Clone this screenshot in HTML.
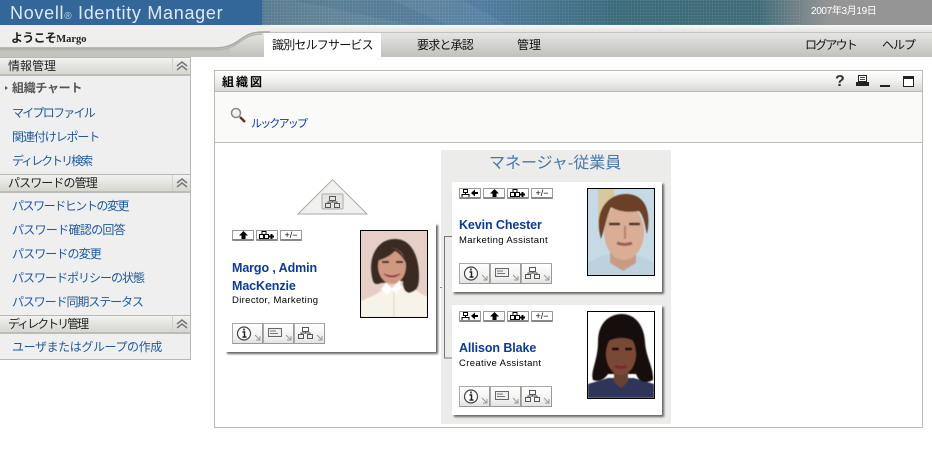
<!DOCTYPE html>
<html lang="ja"><head><meta charset="utf-8"><title>Novell Identity Manager</title>
<style>
*{box-sizing:border-box}
html,body{margin:0;padding:0;width:932px;height:464px;overflow:hidden;background:#fff;font-family:"Liberation Sans","WenQuanYi Zen Hei","Noto Sans CJK JP",sans-serif;font-size:12px}
.a{position:absolute;white-space:nowrap}
.sh{position:absolute;left:0;width:190px;height:19px;background:linear-gradient(#f2f2f0,#e0e0dc 60%,#d8d8d3);border-top:1px solid #b9b9b3;border-bottom:2px solid #bcbcb6;color:#222;padding-left:8px;line-height:17px}
.sh b{position:absolute;left:172px;top:0;width:18px;height:16px;border-left:1px solid #d0d0cc}
.it{position:absolute;left:12px;color:#1d5a9c;white-space:nowrap;line-height:14px}
.tb{position:absolute;height:11px;width:22px;background:#fff;border:1px solid #999;border-bottom:2px solid #888;border-radius:1px;font:9px/9px "Liberation Sans",sans-serif;text-align:center;color:#000}
.card{position:absolute;background:#fff;box-shadow:2px 2px 2px #666}
.ab{position:absolute;width:31px;height:21px;background:linear-gradient(#fff,#f0f0ee 70%,#e2e2e0);border:1px solid #aaa;border-right:1px solid #999;border-bottom:1px solid #999}
.name{position:absolute;color:#0b3a9e;font:bold 12.500px/18px "Liberation Sans",sans-serif;letter-spacing:-.1px;white-space:nowrap}
.job{position:absolute;color:#000;font:9.500px/12px "Liberation Sans",sans-serif;letter-spacing:.35px;white-space:nowrap}
.ph{position:absolute;width:68px;height:88px;border:1px solid #000;overflow:hidden}
svg{display:block}
</style></head><body>
<svg width="0" height="0" style="position:absolute"><defs>
<filter id="soft"><feGaussianBlur stdDeviation=".6"/></filter>
<g id="org" fill="none" stroke="#555" stroke-width="1"><rect x="4.500" y=".5" width="6" height="4"/><rect x=".5" y="7.500" width="5" height="4"/><rect x="9.500" y="7.500" width="5" height="4"/><path d="M7.500 4.500v1.500M3 7.500V6h9v1.500"/></g>
<g id="tree" fill="none" stroke="#000"><path d="M.5 3.500h4v4h-4zM5.500 3.500h4v4h-4zM3 3.500V.5h4v3"/><path d="M10 5.500h5M12.500 3v5" stroke-width="2"/></g>
<g id="up"><path d="M4.500 0L9 4.500H6.500V8h-4V4.500H0z"/></g>
<g id="mgr" fill="none" stroke="#000"><path d="M2.500.5h4v3h-4zM.5 5.500h8M4.500 3.500v2M1 5.500v2.500M8 5.500v2.500"/><path d="M10 4l4-3.500V3h3v2h-3v2.500z" fill="#000" stroke="none"/></g>
<g id="ag"><path fill="none" stroke="#999" d="M0 0L5 5M5 1V5H1"/></g>
<g id="info"><circle cx="11" cy="9.500" r="6.500" fill="#fff" stroke="#444" stroke-width="1.200"/><path d="M11 4.500v2" stroke="#222" stroke-width="1.500"/><path d="M9.500 8H11.500v5M9.500 13h4" stroke="#222" stroke-width="1.500" fill="none"/></g>
<g id="card"><rect x="4.500" y="4.500" width="13" height="8" fill="#eee" stroke="#666"/><path d="M6 7h6M6 9.500h8" stroke="#777"/></g>
<pattern id="dots" width="3" height="3" patternUnits="userSpaceOnUse"><rect width="1" height="1" fill="#fff" opacity=".12"/><rect x="1.500" y="1.500" width="1" height="1" fill="#000" opacity=".12"/></pattern>
</defs></svg>

<!-- header -->
<div class="a" style="left:0;top:0;width:932px;height:25px;background:linear-gradient(90deg,#336699 0,#336699 262px,#53788f 263px,#5c8296 330px,#557fa3 480px,#3f6f7e 620px,#44707c 760px,#77878c 800px,#959595 830px,#959595 100%)"></div>
<svg class="a" style="left:262px;top:0" width="540" height="25"><path d="M30 0L150 25H0V0z M130 0h70l45 25h-60z" fill="#fff" opacity=".06"/><rect width="540" height="25" fill="url(#dots)"/></svg>
<div class="a" style="left:10px;top:1px;color:#dfe9f3;font:18px/24px 'Liberation Sans',sans-serif;letter-spacing:.7px">Novell<span style="font-size:10px;opacity:.85">®</span> Identity Manager</div>
<div class="a" style="left:811px;top:6px;color:#fff;font-size:10px;line-height:12px;letter-spacing:-.35px">2007年3月19日</div>

<!-- top band -->
<div class="a" style="left:0;top:25px;width:932px;height:32px;background:#c3c4bf"></div>
<div class="a" style="left:0;top:25px;width:932px;height:7px;background:linear-gradient(#f7f7f6,#e4e4e2)"></div>
<div class="a" style="left:230px;top:33px;width:702px;height:24px;background:linear-gradient(#e5e6e3,#bfc1bb)"></div>
<svg class="a" style="left:0;top:25px" width="270" height="32"><path d="M0 0H270V7H262C240 7 240 23 215 23H0z" fill="#efefed"/><path d="M0 23H215C240 23 240 7 262 7H270" fill="none" stroke="#a9aaa4" stroke-width="1.500"/><path d="M0 25H215C240 25 240 9 262 9" fill="none" stroke="#b5b6b0" stroke-width="1.500"/></svg>
<div class="a" style="left:11px;top:31px;color:#222;font-weight:bold;line-height:14px;font-size:12px;letter-spacing:-.7px">ようこそ<span style="font-size:10.500px;letter-spacing:0;font-family:'Liberation Serif',serif">Margo</span></div>
<div class="a" style="left:264px;top:33px;width:117px;height:24px;background:#fff"></div>
<div class="a" style="left:272px;top:38px;color:#111;line-height:14px;letter-spacing:-.8px">識別セルフサービス</div>
<div class="a" style="left:417px;top:38px;color:#111;line-height:14px;letter-spacing:-.8px">要求と承認</div>
<div class="a" style="left:517px;top:38px;color:#111;line-height:14px">管理</div>
<div class="a" style="left:805px;top:38px;color:#111;line-height:14px;letter-spacing:-1.800px">ログアウト</div>
<div class="a" style="left:882px;top:38px;color:#111;line-height:14px;letter-spacing:-1px">ヘルプ</div>

<!-- sidebar -->
<div class="a" style="left:0;top:57px;width:191px;height:303px;background:#efefef;border-right:1px solid #b9b9b3;border-bottom:1px solid #b9b9b3"></div>
<div class="sh" style="top:57px">情報管理<b><svg width="18" height="16"><path d="M4 8l5-4 5 4M4 12l5-4 5 4" fill="none" stroke="#777" stroke-width="1.500"/></svg></b></div>
<div class="a" style="left:5px;top:86px;width:0;height:0;border-left:3px solid #555;border-top:2px solid transparent;border-bottom:2px solid transparent"></div>
<div class="it" style="top:81px;color:#555;font-weight:bold;letter-spacing:-.3px">組織チャート</div>
<div class="it" style="top:106px;letter-spacing:-1.750px">マイプロファイル</div>
<div class="it" style="top:130px;letter-spacing:-1.100px">関連付けレポート</div>
<div class="it" style="top:154px;letter-spacing:-2px">ディレクトリ検索</div>
<div class="sh" style="top:174px;letter-spacing:-.9px">パスワードの管理<b><svg width="18" height="16"><path d="M4 8l5-4 5 4M4 12l5-4 5 4" fill="none" stroke="#777" stroke-width="1.500"/></svg></b></div>
<div class="it" style="top:199px;letter-spacing:-1.450px">パスワードヒントの変更</div>
<div class="it" style="top:223px;letter-spacing:-.7px">パスワード確認の回答</div>
<div class="it" style="top:247px;letter-spacing:-.9px">パスワードの変更</div>
<div class="it" style="top:271px;letter-spacing:-1px">パスワードポリシーの状態</div>
<div class="it" style="top:295px;letter-spacing:-1.100px">パスワード同期ステータス</div>
<div class="sh" style="top:315px;letter-spacing:-2px">ディレクトリ管理<b><svg width="18" height="16"><path d="M4 8l5-4 5 4M4 12l5-4 5 4" fill="none" stroke="#777" stroke-width="1.500"/></svg></b></div>
<div class="it" style="top:340px;letter-spacing:-.4px">ユーザまたはグループの作成</div>

<!-- panel -->
<div class="a" style="left:214px;top:70px;width:709px;height:358px;border:1px solid #bcbcb6;background:#fff"></div>
<div class="a" style="left:215px;top:71px;width:707px;height:21px;background:linear-gradient(#fff,#eeeeec 55%,#d6d7d2);border-bottom:1px solid #bcbcb6"></div>
<div class="a" style="left:222px;top:75px;color:#000;font-weight:bold;letter-spacing:2px;line-height:14px">組織図</div>
<div class="a" style="left:835px;top:74px;color:#333;font:bold 16px/15px 'Liberation Sans',sans-serif">?</div>
<svg class="a" style="left:855px;top:75px" width="70" height="14"><path d="M3.500 .5h8v6h-8z" fill="#fff" stroke="#222"/><path d="M5 2.500h5M5 4.500h5" stroke="#444"/><path d="M1 7h13v4H1z" fill="#222"/><path d="M25 11h10" stroke="#222" stroke-width="2"/><path d="M48.500 1.500h10v10h-10z" fill="#fff" stroke="#222"/><path d="M48 2.500h11" stroke="#222" stroke-width="3"/></svg>
<div class="a" style="left:215px;top:92px;width:707px;height:51px;background:#fafaf8;border-bottom:1px solid #bcbcb6"></div>
<svg class="a" style="left:230px;top:107px" width="17" height="17"><path d="M10 10l5 5" stroke="#7a2a20" stroke-width="2.500"/><circle cx="6" cy="6" r="4.500" fill="#f2f2f2" stroke="#888" stroke-width="1.500"/><path d="M3.500 5c.5-1.500 1.500-2 3-2" stroke="#fff" fill="none"/></svg>
<div class="a" style="left:251px;top:117px;color:#0b3a9e;font-size:11px;line-height:14px;letter-spacing:-1.800px">ルックアップ</div>

<!-- triangle -->
<svg class="a" style="left:297px;top:179px" width="72" height="36"><path d="M35.500 .7L70 35H1z" fill="#f0f0ee" stroke="#a9a9a5"/><rect x="25" y="15" width="21" height="15" rx="1" fill="#e4e4e2" stroke="#aaa"/><use href="#org" x="28" y="17"/></svg>

<!-- left card -->
<div class="card" style="left:225px;top:223px;width:211px;height:129px"></div>
<div class="tb" style="left:232px;top:230px"><svg width="20" height="9"><use href="#up" x="6"/></svg></div>
<div class="tb" style="left:256px;top:230px"><svg width="20" height="9"><use href="#tree" x="2"/></svg></div>
<div class="tb" style="left:280px;top:230px">+/−</div>
<div class="name" style="left:232px;top:259px">Margo , Admin<br>MacKenzie</div>
<div class="job" style="left:232px;top:295px">Director, Marketing</div>
<div class="ph" style="left:360px;top:230px"><svg width="66" height="86"><rect width="66" height="86" fill="#e6cfc7"/><g filter="url(#soft)"><path d="M0 86V70l14-6 12-8 8 2 10-4 12 6 10 6v20z" fill="#f8f3e8"/><path d="M12 50C6 30 14 8 34 8C52 8 58 28 58 45C58 56 56 60 48 62C42 60 42 55 42 50L20 52C16 54 13 53 12 50z" fill="#3a2a22"/><ellipse cx="31" cy="35" rx="14" ry="18" fill="#cf9880"/><path d="M16 30C20 14 40 10 46 34C42 26 38 22 34 20C28 26 22 28 16 30z" fill="#3a2a22"/><path d="M23 43q8 4 16 0-8 6-16 0z" fill="#9c2c3a" stroke="#9c2c3a"/><path d="M21 31h7M35 31h7" stroke="#2e1c18" stroke-width="2"/><path d="M25 52l6 5 8-8 1 8-6 6-4-4-4 5-6-6z" fill="#fff"/><path d="M33 60v26" stroke="#ddd4c4"/></g></svg></div>
<div class="ab" style="left:232px;top:323px"><svg width="29" height="19"><use href="#info"/><use href="#ag" x="22" y="11"/></svg></div>
<div class="ab" style="left:263px;top:323px"><svg width="29" height="19"><use href="#card"/><use href="#ag" x="22" y="11"/></svg></div>
<div class="ab" style="left:294px;top:323px"><svg width="29" height="19"><use href="#org" x="3" y="3"/><use href="#ag" x="22" y="11"/></svg></div>

<!-- group -->
<div class="a" style="left:441px;top:150px;width:230px;height:274px;background:#ececea"></div>
<svg class="a" style="left:440px;top:236px;z-index:1" width="13" height="124"><path d="M12 .5H4.500V122H12" fill="none" stroke="#777"/><path d="M0 51.500h2" stroke="#888"/></svg>
<div class="a" style="left:489px;top:154px;color:#4878a8;font-size:16px;line-height:19px">マネージャ-従業員</div>

<!-- kevin -->
<div class="card" style="left:452px;top:182px;width:210px;height:110px;z-index:2"></div>
<div style="position:absolute;left:0;top:0;z-index:3">
<div class="tb" style="left:459px;top:188px"><svg width="20" height="9"><use href="#mgr" x="1"/></svg></div>
<div class="tb" style="left:483px;top:188px"><svg width="20" height="9"><use href="#up" x="6"/></svg></div>
<div class="tb" style="left:507px;top:188px"><svg width="20" height="9"><use href="#tree" x="2"/></svg></div>
<div class="tb" style="left:531px;top:188px">+/−</div>
<div class="name" style="left:459px;top:216px">Kevin Chester</div>
<div class="job" style="left:459px;top:235px">Marketing Assistant</div>
<div class="ph" style="left:587px;top:188px"><svg width="66" height="86"><rect width="66" height="86" fill="#c6dae6"/><rect x="10" width="16" height="34" fill="#d8c8a0"/><g filter="url(#soft)"><path d="M0 86V74l16-8 34 0 16 8v12z" fill="#bcd2de"/><path d="M22 60h26v14l-13 8-13-8z" fill="#c89c84"/><ellipse cx="36" cy="43" rx="20" ry="28" fill="#d9ae95"/><path d="M13 50C5 22 20 5 38 5s26 16 21 40c-2-8-3-18-8-23-12 2-22 0-28-4-4 8-6 20-10 32z" fill="#6a3f26"/><path d="M21 35h11M41 35h11" stroke="#4a2a20" stroke-width="2.500"/><path d="M37 37v13" stroke="#b58068" stroke-width="2"/><path d="M29 54q8 3 15 0" stroke="#a05a52" stroke-width="3" fill="none"/></g></svg></div>
<div class="ab" style="left:459px;top:263px"><svg width="29" height="19"><use href="#info"/><use href="#ag" x="22" y="11"/></svg></div>
<div class="ab" style="left:490px;top:263px"><svg width="29" height="19"><use href="#card"/><use href="#ag" x="22" y="11"/></svg></div>
<div class="ab" style="left:521px;top:263px"><svg width="29" height="19"><use href="#org" x="3" y="3"/><use href="#ag" x="22" y="11"/></svg></div>
</div>

<!-- allison -->
<div class="card" style="left:452px;top:305px;width:210px;height:110px;z-index:2"></div>
<div style="position:absolute;left:0;top:0;z-index:3">
<div class="tb" style="left:459px;top:311px"><svg width="20" height="9"><use href="#mgr" x="1"/></svg></div>
<div class="tb" style="left:483px;top:311px"><svg width="20" height="9"><use href="#up" x="6"/></svg></div>
<div class="tb" style="left:507px;top:311px"><svg width="20" height="9"><use href="#tree" x="2"/></svg></div>
<div class="tb" style="left:531px;top:311px">+/−</div>
<div class="name" style="left:459px;top:339px">Allison Blake</div>
<div class="job" style="left:459px;top:358px">Creative Assistant</div>
<div class="ph" style="left:587px;top:311px"><svg width="66" height="86"><rect width="66" height="86" fill="#fff"/><g filter="url(#soft)"><path d="M0 86V72l20-6h26l20 6v14z" fill="#2e3558"/><path d="M5 68C2 60 10 48 10 30 10 10 22 2 34 2s22 10 23 28c1 16 9 26 8 38-8 4-14 2-17-6H20c-4 6-10 8-15 6z" fill="#17110f"/><path d="M26 58h14v12l-7 6-7-6z" fill="#6a4030"/><ellipse cx="33" cy="42" rx="15" ry="21" fill="#7a4a35"/><path d="M24 37h7M37 37h7" stroke="#1c100c" stroke-width="3"/><path d="M27 54q6 3 12 0" stroke="#7a2c2c" stroke-width="3" fill="none"/><path d="M18 30q14-18 30 0-14-8-30 0z" fill="#17110f"/></g></svg></div>
<div class="ab" style="left:459px;top:386px"><svg width="29" height="19"><use href="#info"/><use href="#ag" x="22" y="11"/></svg></div>
<div class="ab" style="left:490px;top:386px"><svg width="29" height="19"><use href="#card"/><use href="#ag" x="22" y="11"/></svg></div>
<div class="ab" style="left:521px;top:386px"><svg width="29" height="19"><use href="#org" x="3" y="3"/><use href="#ag" x="22" y="11"/></svg></div>
</div>
</body></html>
